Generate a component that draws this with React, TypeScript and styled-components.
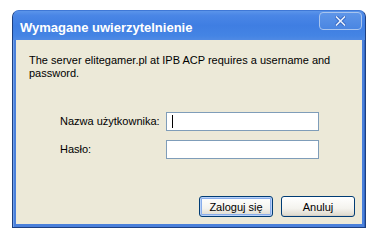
import styled, { createGlobalStyle } from 'styled-components';

const GlobalStyle = createGlobalStyle`
	html, body {
		margin: 0;
		background: #ffffff;
	}
	* {
		box-sizing: border-box;
	}
`;

const Page = styled.div`
	padding: 10px 12px;
`;

const Window = styled.div`
	width: 354px;
	height: 218px;
	display: flex;
	flex-direction: column;
	border: 1px solid #1c3f80;
	border-top-color: #3f78d6;
	border-radius: 7px 7px 0 0;
	background: #4a80db;
	padding: 0 3px 3px;
	box-shadow: inset 1px 0 0 #6fa0ec, inset -1px 0 0 #3468c2;
`;

const TitleBar = styled.div`
	height: 29px;
	display: flex;
	align-items: center;
	justify-content: space-between;
	margin: 0 -3px;
	padding-left: 7px;
	padding-right: 3px;
	border-radius: 6px 6px 0 0;
	background: linear-gradient(
		to bottom,
		#5b95ea 0%,
		#4a86e6 15%,
		#3f7ee2 50%,
		#4484e4 85%,
		#4f8ae4 100%
	);
`;

const Title = styled.span`
	font-family: 'Liberation Sans', Arial, sans-serif;
	font-weight: bold;
	font-size: 13px;
	color: #ffffff;
	margin-top: 3px;
`;

const CloseButton = styled.div`
	width: 43px;
	height: 18px;
	align-self: flex-start;
	margin-top: 1px;
	display: flex;
	align-items: center;
	justify-content: center;
	border: 1px solid #a8c4ee;
	border-radius: 4px;
	background: linear-gradient(to bottom, #5e95e8, #4a86e2);
`;

const Body = styled.div`
	flex: 1;
	background: #ece9d8;
	padding: 14px 7px 7px 13px;
	display: flex;
	flex-direction: column;
	font-family: 'Liberation Sans', Arial, sans-serif;
	font-size: 11px;
	color: #000000;
`;

const Message = styled.p`
	margin: 0;
	line-height: 13px;
`;

const Form = styled.div`
	margin: 32px 0 0 31px;
	display: grid;
	grid-template-columns: 106px 153px;
	row-gap: 9px;
	align-items: center;
`;

const Label = styled.label`
	line-height: 19px;
`;

const Field = styled.div`
	height: 19px;
	background: #ffffff;
	border: 1px solid #7f9db9;
	display: flex;
	align-items: center;
	padding-left: 5px;
`;

const Caret = styled.span`
	width: 1px;
	height: 13px;
	background: #000000;
`;

const Footer = styled.div`
	margin-top: auto;
	display: flex;
	justify-content: flex-end;
	gap: 8px;
`;

const Button = styled.button<{ $default?: boolean }>`
	width: 74px;
	height: 21px;
	font-family: 'Liberation Sans', Arial, sans-serif;
	font-size: 11px;
	color: #000000;
	border: 1px solid #003c74;
	border-radius: 3px;
	background: linear-gradient(to bottom, #ffffff 0%, #f4f3ee 60%, #dcd8cb 100%);
	box-shadow: ${(p) =>
		p.$default
			? 'inset 0 0 0 1px #b9d1f8, inset 0 0 0 2px #89adea'
			: 'inset 0 -1px 0 #d6d0c5'};
	padding: 0;
`;

export default function App() {
	return (
		<>
			<GlobalStyle />
			<Page>
				<Window>
					<TitleBar>
						<Title>Wymagane uwierzytelnienie</Title>
						<CloseButton>
							<svg width='11' height='10' viewBox='0 0 11 10'>
								<path
									d='M1.5 1 L9.5 9 M9.5 1 L1.5 9'
									stroke='#3466c2'
									strokeWidth='3.4'
									strokeLinecap='square'
								/>
								<path
									d='M1.5 1 L9.5 9 M9.5 1 L1.5 9'
									stroke='#e8f0fc'
									strokeWidth='1.6'
									strokeLinecap='square'
								/>
							</svg>
						</CloseButton>
					</TitleBar>
					<Body>
						<Message>
							The server elitegamer.pl at IPB ACP requires a username and password.
						</Message>
						<Form>
							<Label>Nazwa użytkownika:</Label>
							<Field>
								<Caret />
							</Field>
							<Label>Hasło:</Label>
							<Field />
						</Form>
						<Footer>
							<Button $default>Zaloguj się</Button>
							<Button>Anuluj</Button>
						</Footer>
					</Body>
				</Window>
			</Page>
		</>
	);
}
